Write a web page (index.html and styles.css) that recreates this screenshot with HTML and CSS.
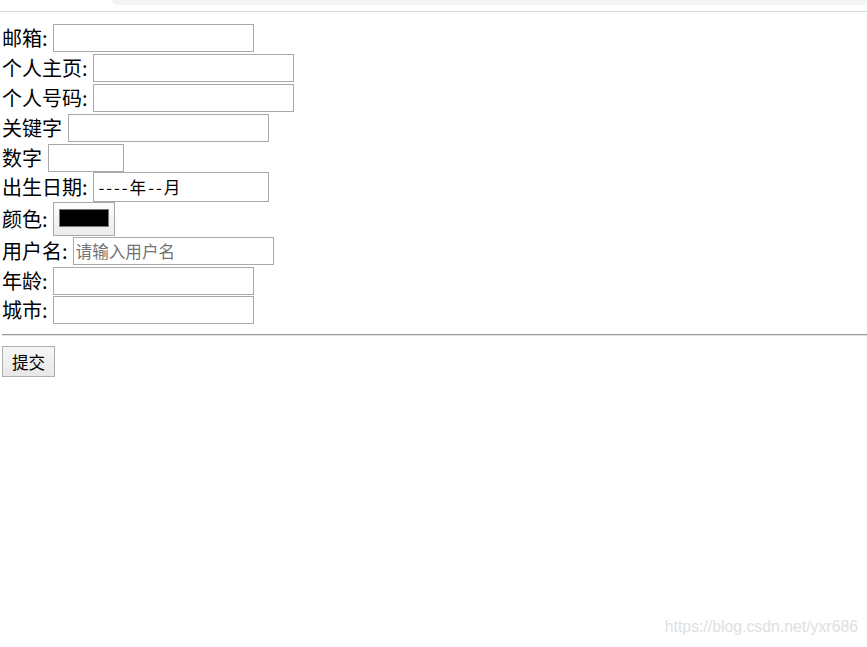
FILE: index.html
```html
<!DOCTYPE html>
<html lang="zh-CN">
<head>
    <meta charset="UTF-8">
    <title>表单</title>
    <link rel="stylesheet" href="styles.css">
</head>
<body>

<div class="tabbar">
    <div class="tab"></div>
</div>

<form class="form" action="#" method="get">
    <div class="row">
        <label for="email">邮箱:</label>
        <input type="text" id="email" class="field">
    </div>
    <div class="row">
        <label for="homepage">个人主页:</label>
        <input type="text" id="homepage" class="field">
    </div>
    <div class="row">
        <label for="phone">个人号码:</label>
        <input type="text" id="phone" class="field">
    </div>
    <div class="row wide">
        <label for="keyword">关键字</label>
        <input type="text" id="keyword" class="field">
    </div>
    <div class="row wide flush">
        <label for="num">数字</label>
        <input type="text" id="num" class="field field-num">
    </div>
    <div class="row flush">
        <label for="birth">出生日期:</label>
        <input type="text" id="birth" class="field field-date" value="----年--月" readonly>
    </div>
    <div class="row snug">
        <label for="color">颜色:</label>
        <div class="color-box" id="color"><span class="swatch"></span></div>
    </div>
    <div class="row">
        <label for="user">用户名:</label>
        <input type="text" id="user" class="field" placeholder="请输入用户名">
    </div>
    <div class="row snug">
        <label for="age">年龄:</label>
        <input type="text" id="age" class="field">
    </div>
    <div class="row">
        <label for="city">城市:</label>
        <input type="text" id="city" class="field">
    </div>

    <hr class="divider">

    <button type="submit" class="submit-button">提交</button>
</form>

<div class="watermark">https://blog.csdn.net/yxr686</div>

</body>
</html>
```

FILE: styles.css
```css
body {
    margin: 0;
    padding: 0 0 0 2px;
    font-family: "Noto Sans CJK SC", sans-serif;
    color: #000;
    background: #fff;
}
.tabbar {
    height: 11px;
    margin-left: -2px;
    border-bottom: 1px solid #dadce0;
}
.tab {
    margin-left: 112px;
    height: 5px;
    background-color: #f1f3f4;
    border-radius: 0 0 8px 8px;
}
.form {
    margin-top: 12px;
}
.row {
    display: flex;
    align-items: center;
    gap: 5px;
    margin-bottom: 2px;
}
.row.wide {
    gap: 6px;
}
.row.flush {
    margin-bottom: 0;
}
.row.snug {
    margin-bottom: 1px;
}
.row label {
    font-size: 20px;
    line-height: 24px;
}
.field {
    box-sizing: border-box;
    width: 201px;
    height: 28px;
    margin: 0;
    padding: 0 2px;
    border: 1px solid #a9a9a9;
    font-family: "Noto Sans CJK SC", sans-serif;
    font-size: 16.6px;
    color: #000;
    outline: none;
}
.field::placeholder {
    color: #757575;
}
.field-num {
    width: 76px;
}
.field-date {
    width: 176px;
    height: 30px;
    padding-left: 5px;
    letter-spacing: 2px;
}
.color-box {
    box-sizing: border-box;
    width: 62px;
    height: 34px;
    padding: 6px 5px;
    border: 1px solid #a9a9a9;
    background: linear-gradient(#fdfdfd, #ececec);
}
.swatch {
    display: block;
    height: 18px;
    border: 1px solid #777;
    background-color: #000;
    box-sizing: border-box;
}
.divider {
    margin: 10px 0 10px;
    border: none;
    border-top: 1px solid #9a9a9a;
    border-bottom: 1px solid #e2e2e2;
}
.submit-button {
    box-sizing: border-box;
    width: 53px;
    height: 31px;
    padding: 0;
    border: 1px solid #adadad;
    background: linear-gradient(#f6f6f6, #e8e8e8);
    font-family: "Noto Sans CJK SC", sans-serif;
    font-size: 16.6px;
    color: #000;
}
.watermark {
    position: absolute;
    right: 9px;
    top: 618px;
    font-family: "Liberation Sans", Arial, sans-serif;
    font-size: 15.8px;
    color: #e0e0e0;
}
```
